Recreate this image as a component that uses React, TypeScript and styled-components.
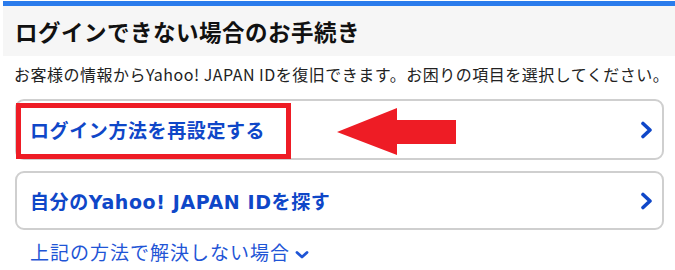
import React from "react";
import styled, { createGlobalStyle } from "styled-components";

const Global = createGlobalStyle`
  html, body { margin: 0; padding: 0; background: #fff; }
  body { font-family: "Noto Sans CJK JP", "Noto Sans", sans-serif; }
`;

const Page = styled.div`
  padding: 1px 0 0 3px;
  width: 672px;
`;

const TopBar = styled.div`
  height: 5px;
  background: #2b7cec;
`;

const Header = styled.div`
  height: 50px;
  background: #f6f6f6;
  display: flex;
  align-items: center;
  padding-left: 12px;
`;

const Title = styled.h1`
  margin: 0;
  font-size: 22.5px;
  font-weight: 700;
  color: #111;
  letter-spacing: 0.5px;
`;

const Lead = styled.p`
  margin: 7px 0 0 11px;
  font-size: 16px;
  line-height: 22px;
  color: #222;
  white-space: nowrap;
  letter-spacing: 0.5px;
`;

const List = styled.div`
  margin: 14px 0 0 12px;
  width: 649px;
  display: flex;
  flex-direction: column;
  gap: 11px;
`;

const Card = styled.a<{ h: number }>`
  position: relative;
  box-sizing: border-box;
  height: ${(p) => p.h}px;
  border: 2px solid #cfcfcf;
  border-radius: 9px;
  display: flex;
  align-items: center;
  justify-content: space-between;
  padding: 0 8px 0 13px;
  text-decoration: none;
  color: #0f47c8;
  cursor: pointer;
`;

const CardLabel = styled.span`
  font-family: "DejaVu Sans", "Noto Sans CJK JP", sans-serif;
  font-size: 19px;
  font-weight: 700;
  letter-spacing: 0.6px;
`;

const Highlight = styled.div`
  position: absolute;
  left: -1px;
  top: 2px;
  width: 275px;
  height: 56px;
  box-sizing: border-box;
  border: 5px solid #ee1c25;
  pointer-events: none;
`;

const Arrow = styled.svg`
  position: absolute;
  left: 318px;
  top: 5px;
  pointer-events: none;
`;

const More = styled.a`
  margin: 8px 0 0 27px;
  display: inline-flex;
  align-items: center;
  gap: 5px;
  font-size: 19px;
  color: #1f55d6;
  text-decoration: none;
  letter-spacing: 1px;
`;

const ChevronRight = () => (
  <svg width="14" height="18" viewBox="0 0 14 18">
    <path d="M3 2.5 L10 9 L3 15.5" fill="none" stroke="#0f47c8" strokeWidth="3.6" strokeLinecap="round" strokeLinejoin="round" />
  </svg>
);

const ChevronDown = () => (
  <svg width="14" height="10" viewBox="0 0 14 10" style={{ marginTop: 7 }}>
    <path d="M2 2.5 L7 7 L12 2.5" fill="none" stroke="#1f55d6" strokeWidth="2.8" strokeLinecap="round" strokeLinejoin="round" />
  </svg>
);

export default function App() {
  return (
    <>
      <Global />
      <Page>
        <TopBar />
        <Header>
          <Title>ログインできない場合のお手続き</Title>
        </Header>
        <Lead>お客様の情報からYahoo! JAPAN IDを復旧できます。お困りの項目を選択してください。</Lead>
        <List>
          <Card h={61}>
            <CardLabel>ログイン方法を再設定する</CardLabel>
            <ChevronRight />
            <Highlight />
            <Arrow width="124" height="50" viewBox="0 0 124 50">
              <polygon points="2,26 62,2 62,14 121,14 121,38 62,38 62,49" fill="#ee1c25" />
            </Arrow>
          </Card>
          <Card h={59}>
            <CardLabel>自分のYahoo! JAPAN IDを探す</CardLabel>
            <ChevronRight />
          </Card>
        </List>
        <More>
          上記の方法で解決しない場合
          <ChevronDown />
        </More>
      </Page>
    </>
  );
}
